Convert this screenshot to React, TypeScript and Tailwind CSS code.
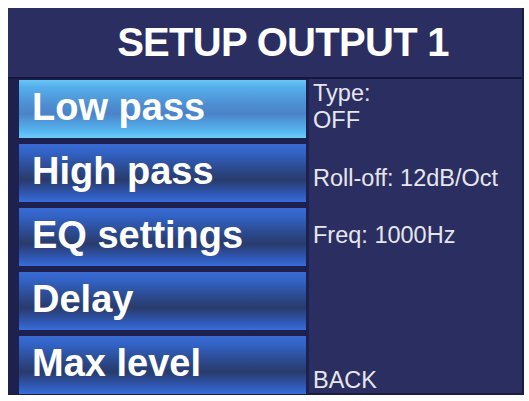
const MENU = ["Low pass", "High pass", "EQ settings", "Delay", "Max level"];

function MenuButton({ label, active }: { label: string; active: boolean }) {
  return (
    <div
      className={`flex h-[58px] items-center pb-[5px] pl-[13px] text-[38px] leading-[38px] font-bold text-white ${
        active
          ? "bg-[linear-gradient(180deg,#6ac6f7_0%,#55afec_12%,#4d8fd2_42%,#4a83c8_58%,#56b6f0_88%,#6ccbf8_100%)]"
          : "bg-[linear-gradient(180deg,#386bd3_0%,#3262c4_15%,#2c4c92_40%,#283b6c_62%,#2f58b4_86%,#386dd8_100%)]"
      }`}
    >
      {label}
    </div>
  );
}

export default function App() {
  return (
    <div className="h-[401px] w-[529px] bg-white pt-[8px] pl-[8px] font-['Liberation_Sans',Arial,sans-serif]">
      <div className="flex h-[387px] w-[516px] flex-col border-r-2 border-b-2 border-[#1a1c40] bg-[#2b2e60]">
        <header className="flex h-[71px] shrink-0 items-center justify-center border-b-2 border-[#15173a] pb-[2px] pl-[36px]">
          <h1 className="text-[40px] leading-[40px] font-bold tracking-[-0.7px] text-white">
            SETUP OUTPUT 1
          </h1>
        </header>

        <div className="flex flex-1">
          <div className="flex w-[301px] flex-col gap-[6px] bg-[#1e2050] pt-[1px] pr-[3px] pl-[11px]">
            {MENU.map((label, i) => (
              <MenuButton key={label} label={label} active={i === 0} />
            ))}
          </div>

          <div className="flex flex-1 flex-col pt-[1px] pl-[4px] text-[23.5px] leading-[27px] text-[#e6e6ee]">
            <div>Type:</div>
            <div>OFF</div>
            <div className="mt-[31px]">Roll-off: 12dB/Oct</div>
            <div className="mt-[30px]">Freq: 1000Hz</div>
            <div className="mt-auto">BACK</div>
          </div>
        </div>
      </div>
    </div>
  );
}
